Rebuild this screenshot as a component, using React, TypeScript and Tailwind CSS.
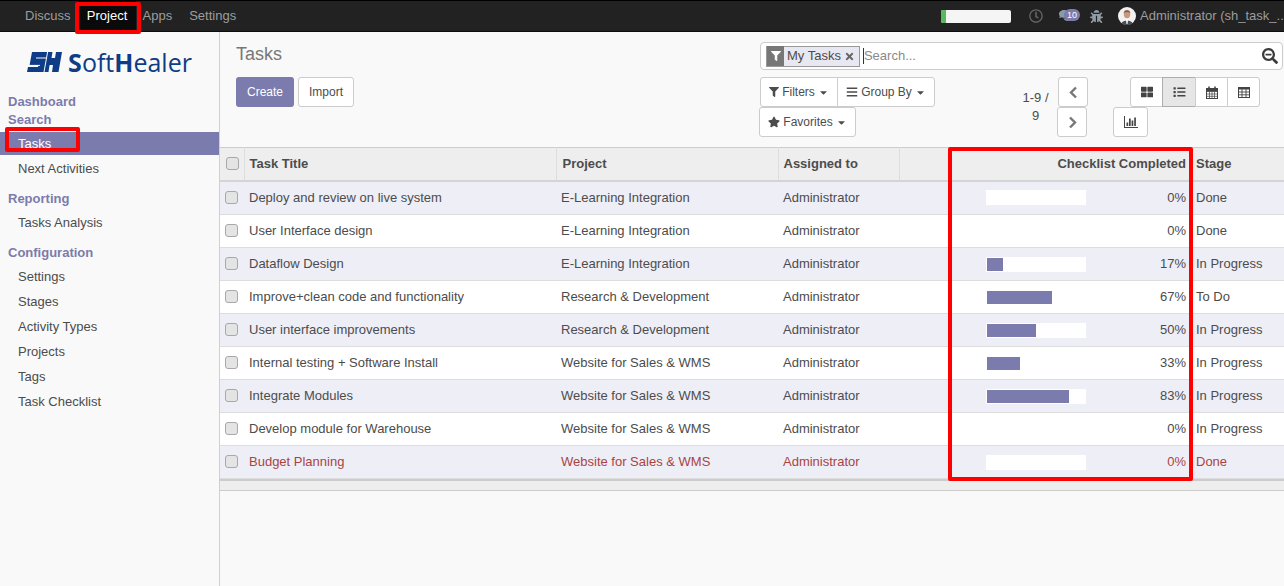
import React from "react";
import { FaFilter, FaBars, FaStar, FaThLarge, FaList, FaRegClock, FaComments, FaBug, FaSearchMinus, FaTimes, FaCaretDown } from "react-icons/fa";

const rows = [
  { t: "Deploy and review on live system", p: "E-Learning Integration", c: 0, w: 0, s: "Done", bar: true },
  { t: "User Interface design", p: "E-Learning Integration", c: 0, w: 0, s: "Done", bar: false },
  { t: "Dataflow Design", p: "E-Learning Integration", c: 17, w: 16, s: "In Progress", bar: true },
  { t: "Improve+clean code and functionality", p: "Research & Development", c: 67, w: 65, s: "To Do", bar: false },
  { t: "User interface improvements", p: "Research & Development", c: 50, w: 49, s: "In Progress", bar: true },
  { t: "Internal testing + Software Install", p: "Website for Sales & WMS", c: 33, w: 33, s: "In Progress", bar: false },
  { t: "Integrate Modules", p: "Website for Sales & WMS", c: 83, w: 82, s: "In Progress", bar: true },
  { t: "Develop module for Warehouse", p: "Website for Sales & WMS", c: 0, w: 0, s: "In Progress", bar: false },
  { t: "Budget Planning", p: "Website for Sales & WMS", c: 0, w: 0, s: "Done", bar: true, red: true },
];

function Check({ className = "" }: { className?: string }) {
  return <span className={`block w-[13px] h-[13px] rounded-[3px] bg-[#e4e4e4] border border-[#a8a8a8] ${className}`} />;
}

function Logo() {
  return (
    <div className="flex items-center justify-center h-[22px] mt-[19px] text-[#0f3c87]">
      <svg width="35" height="20" viewBox="0 0 35 20" className="mr-[6px]">
        <path d="M5 0H35L31.5 20H0L1 15H11L11.6 13H2.6L5 0Z" fill="#0f3c87" />
        <path d="M9 6H20M0 13.4H13" stroke="#f9f9f9" strokeWidth="1" fill="none" />
        <path d="M20.6 0L17 20" stroke="#f9f9f9" strokeWidth="1" fill="none" />
        <path d="M25.5 0H29L28 6H24.5Z" fill="#f9f9f9" />
        <path d="M22.6 13H26L25 20H21.5Z" fill="#f9f9f9" />
      </svg>
      <span className="font-['Open_Sans',sans-serif] text-[25px] leading-none whitespace-nowrap">
        <span className="font-bold">S</span>oft<span className="font-bold">H</span>ealer
      </span>
    </div>
  );
}

function SideHead({ children, className = "" }: { children: React.ReactNode; className?: string }) {
  return <div className={`pl-2 h-[18px] leading-[18px] font-bold text-[#7c7bad] text-[13px] ${className}`}>{children}</div>;
}
function SideItem({ children }: { children: React.ReactNode }) {
  return <div className="pl-[18px] h-[25px] leading-[25px] text-[13px] text-[#4c4c4c]">{children}</div>;
}
function Caret() {
  return <FaCaretDown className="inline-block w-[11px] h-[11px] ml-[3px]" />;
}
function Chevron({ right }: { right?: boolean }) {
  return (
    <svg width="9" height="13" viewBox="0 0 9 13">
      <path d={right ? "M2 1.5L7 6.5L2 11.5" : "M7 1.5L2 6.5L7 11.5"} stroke="#777777" strokeWidth="2.4" fill="none" />
    </svg>
  );
}
function CalendarIcon() {
  return (
    <svg width="12" height="13" viewBox="0 0 12 13" fill="none" stroke="#444444">
      <rect x="0.5" y="2.5" width="11" height="10" />
      <path d="M0.5 5.5H11.5M0.5 8H11.5M0.5 10.3H11.5M3.5 5.5V12.5M6 5.5V12.5M8.5 5.5V12.5" strokeWidth="0.7" />
      <path d="M3 0.5V3.5M9 0.5V3.5" strokeWidth="1.6" />
      <rect x="0.5" y="2.5" width="11" height="2.5" fill="#444444" />
    </svg>
  );
}
function TableIcon() {
  return (
    <svg width="12" height="11" viewBox="0 0 12 11" fill="none" stroke="#444444">
      <rect x="0.5" y="0.5" width="11" height="10" />
      <path d="M0.5 1.5H11.5" strokeWidth="2" />
      <path d="M0.5 5H11.5M0.5 7.8H11.5M4 2V10.5M8 2V10.5" strokeWidth="0.9" />
    </svg>
  );
}
function ChartIcon() {
  return (
    <svg width="14" height="12" viewBox="0 0 14 12" fill="#444444">
      <rect x="0" y="0" width="1" height="12" />
      <rect x="0" y="11" width="14" height="1" />
      <rect x="2.5" y="6.5" width="1.7" height="3.5" />
      <rect x="5" y="2.5" width="1.7" height="7.5" />
      <rect x="7.6" y="4.5" width="1.7" height="5.5" />
      <rect x="10.2" y="1.5" width="1.7" height="8.5" />
    </svg>
  );
}

const box = "h-[30px] border text-[#4c4c4c] text-[12px] flex items-center justify-center";
const btn = `${box} border-[#cccccc] bg-white`;

export default function App() {
  return (
    <div className="w-[1284px] h-[586px] overflow-hidden relative flex flex-col font-['Liberation_Sans',Arial,sans-serif] text-[13px] text-[#4c4c4c] bg-white">
      <header className="h-[32px] shrink-0 bg-[#222222] border-b border-[#0c0c0c] border-t border-t-[#000] flex items-center text-[13px] text-[#9d9d9d]">
        <div className="flex items-center ml-[17px]">
          <span className="px-2 h-[30px] leading-[30px]">Discuss</span>
          <span className="w-[57px] text-center h-[30px] leading-[30px] bg-[#0a0a0a] text-white">Project</span>
          <span className="ml-[7px] h-[30px] leading-[30px]">Apps</span>
          <span className="ml-[17px] h-[30px] leading-[30px]">Settings</span>
        </div>
        <div className="ml-auto flex items-center">
          <div className="w-[70px] h-[13px] rounded-[2px] bg-[#f5f5f5] overflow-hidden mr-[18px]">
            <div className="w-[5px] h-full bg-[#5cb85c]" />
          </div>
          <FaRegClock className="w-[14px] h-[14px] text-[#666666] mr-[16px]" />
          <div className="relative w-[20px] h-[14px] mr-[8px]">
            <FaComments className="absolute left-0 top-0 w-[14px] h-[13px] text-[#8a9ba8]" />
            <span className="absolute left-[5px] top-[0px] h-[12px] w-[16px] rounded-[6px] bg-[#7c7bad] text-white text-[9px] leading-[12px] text-center">10</span>
          </div>
          <FaBug className="w-[13px] h-[13px] text-[#8f9ba5] ml-[3px] mr-[15px]" />
          <svg width="18" height="18" viewBox="0 0 18 18" className="mr-[4px]">
            <circle cx="9" cy="9" r="9" fill="#f4f2f0" />
            <ellipse cx="9" cy="7" rx="3.3" ry="4.2" fill="#c79a80" />
            <path d="M5.7 6C6 2.5 12 2.5 12.3 6C10.5 4.5 7.5 4.5 5.7 6Z" fill="#6b5a50" />
            <path d="M3.5 16C5 12.5 13 12.5 14.5 16L12 18H6Z" fill="#4a4d55" />
            <path d="M8 12.5H10L9.5 17H8.5Z" fill="#fff" />
          </svg>
          <span className="whitespace-nowrap w-[144px]">Administrator (sh_task_..</span>
        </div>
      </header>

      <div className="flex-1 flex min-h-0">
        <aside className="w-[220px] shrink-0 bg-[#f9f9f9] border-r border-[#d0d0d0]">
          <Logo />
          <SideHead className="mt-[20px]">Dashboard</SideHead>
          <SideHead>Search</SideHead>
          <div className="pl-[18px] h-[23px] leading-[23px] bg-[#7c7bad] text-white mt-[3px] mb-[1px] text-[13px]">Tasks</div>
          <SideItem>Next Activities</SideItem>
          <SideHead className="mt-[9px] mb-[2px]">Reporting</SideHead>
          <SideItem>Tasks Analysis</SideItem>
          <SideHead className="mt-[9px] mb-[2px]">Configuration</SideHead>
          <SideItem>Settings</SideItem>
          <SideItem>Stages</SideItem>
          <SideItem>Activity Types</SideItem>
          <SideItem>Projects</SideItem>
          <SideItem>Tags</SideItem>
          <SideItem>Task Checklist</SideItem>
        </aside>

        <main className="flex-1 min-w-0 bg-[#f9f9f9] flex flex-col">
          <div className="h-[115px] shrink-0 flex">
            <div className="w-[540px] shrink-0 pl-[16px]">
              <div className="text-[18px] leading-[20px] text-[#777777] mt-[12px]">Tasks</div>
              <div className="flex mt-[13px] gap-[4px]">
                <button className="w-[58px] h-[30px] rounded-[3px] bg-[#7c7bad] text-white text-[12px]">Create</button>
                <button className="w-[56px] h-[30px] rounded-[3px] bg-white border border-[#cccccc] text-[12px] text-[#4c4c4c]">Import</button>
              </div>
            </div>
            <div className="flex-1 min-w-0 pr-[1px]">
              <div className="mt-[10px] h-[28px] rounded-[4px] border border-[#cccccc] bg-white flex items-center pl-[5px] pr-[4px]">
                <span className="flex items-center h-[21px] border border-[#999999] bg-[#e8e8f2]">
                  <span className="w-[17px] h-[20px] bg-[#777777] flex items-center justify-center"><FaFilter className="w-[10px] h-[10px] text-white" /></span>
                  <span className="px-[3px] text-[13px] leading-[20px] text-[#4c4c4c]">My Tasks</span>
                  <FaTimes className="w-[11px] h-[11px] text-[#666666] mr-[4px]" />
                </span>
                <span className="ml-[3px] w-[1px] h-[16px] bg-[#333333]" />
                <span className="text-[13px] text-[#8a8a8a]">Search...</span>
                <FaSearchMinus className="ml-auto w-[16px] h-[16px] text-[#3b3b3b]" />
              </div>
              <div className="flex mt-[7px]">
                <div className="w-[176px]">
                  <div className="flex">
                    <div className={`${btn} w-[78px] rounded-l-[3px]`}><FaFilter className="w-[10px] h-[10px] mr-[3px]" />Filters<Caret /></div>
                    <div className={`${btn} w-[98px] -ml-[1px] rounded-r-[3px]`}><FaBars className="w-[12px] h-[12px] mr-[3px]" />Group By<Caret /></div>
                  </div>
                  <div className={`${btn} w-[97px] -ml-[1px] rounded-[3px]`}><FaStar className="w-[12px] h-[12px] mr-[3px]" />Favorites<Caret /></div>
                </div>
                <div className="w-[85px] ml-[82px] mt-[12px] text-[13px] leading-[18px] text-center text-[#4c4c4c] pr-[50px] whitespace-nowrap shrink-0">1-9 /<br />9</div>
                <div className="-ml-[56px] shrink-0">
                  <div className={`${btn} w-[30px] rounded-[3px] ml-[11px]`}><Chevron /></div>
                  <div className={`${btn} w-[30px] rounded-[3px] ml-[10px]`}><Chevron right /></div>
                </div>
                <div className="ml-[25px] shrink-0">
                  <div className="flex ml-[17px]">
                    <div className={`${btn} w-[33px] rounded-l-[3px]`}><FaThLarge className="w-[12px] h-[12px] text-[#444444]" /></div>
                    <div className={`${box} w-[34px] -ml-[1px] bg-[#e6e6e6] border-[#adadad]`}><FaList className="w-[13px] h-[12px] text-[#444444]" /></div>
                    <div className={`${btn} w-[33px] -ml-[1px]`}><CalendarIcon /></div>
                    <div className={`${btn} w-[33px] -ml-[1px] rounded-r-[3px]`}><TableIcon /></div>
                  </div>
                  <div className={`${btn} w-[35px] rounded-[3px]`}><ChartIcon /></div>
                </div>
              </div>
            </div>
          </div>

          <div className="bg-white">
            <table className="table-fixed w-[1064px] border-collapse text-[13px]">
              <colgroup>
                <col className="w-[24px]" /><col className="w-[312px]" /><col className="w-[222px]" /><col className="w-[121px]" /><col className="w-[51px]" /><col className="w-[241px]" /><col />
              </colgroup>
              <thead>
                <tr className="h-[33px] bg-[#eeeeee] border-t border-t-[#cccccc] border-b-2 border-b-[#d4d4d4] text-left font-bold">
                  <th className="border-r border-[#dddddd]"><div className="pl-[6px]"><Check /></div></th>
                  <th className="pl-[5px] border-r border-[#dddddd]">Task Title</th>
                  <th className="pl-[6px] border-r border-[#dddddd]">Project</th>
                  <th className="pl-[5px] border-r border-[#dddddd]">Assigned to</th>
                  <th className="border-r border-[#dddddd]"></th>
                  <th className="pr-[5px] text-right">Checklist Completed</th>
                  <th className="pl-[5px]">Stage</th>
                </tr>
              </thead>
              <tbody>
                {rows.map((r, i) => (
                  <tr key={i} className={`${i === 0 ? "h-[34px]" : "h-[33px]"} border-b border-[#dddddd] ${i % 2 === 0 ? "bg-[#eeeef7]" : "bg-white"} ${r.red ? "text-[#a94442]" : ""}`}>
                    <td><div className="pl-[5px]"><Check className={i > 0 ? "-mt-[2px]" : ""} /></div></td>
                    <td className="pl-[5px]">{r.t}</td>
                    <td className="pl-[5px]">{r.p}</td>
                    <td className="pl-[5px]">Administrator</td>
                    <td />
                    <td className="pr-[5px]">
                      <div className="flex items-center">
                        <div className={`ml-[36px] w-[100px] h-[15px] pl-[1px] py-[1px] ${r.bar ? "bg-white" : ""}`}>
                          <div className="h-full bg-[#7c7bad]" style={{ width: `${r.w}px` }} />
                        </div>
                        <span className="ml-auto">{r.c}%</span>
                      </div>
                    </td>
                    <td className="pl-[5px] whitespace-nowrap">{r.s}</td>
                  </tr>
                ))}
              </tbody>
            </table>
            <div className="h-[12px] bg-[#eeeeee] border-t-2 border-b border-t-[#cccccc] border-b-[#cccccc]" />
          </div>
          <div className="flex-1 bg-[#f9f9f9]" />
        </main>
      </div>

      <div className="absolute left-[75px] top-[2px] w-[66px] h-[32px] border-4 border-[#ff0000] rounded-[2px]" />
      <div className="absolute left-[5px] top-[127px] w-[75px] h-[25px] border-4 border-[#ff0000] rounded-[2px]" />
      <div className="absolute left-[948px] top-[147px] w-[245px] h-[334px] border-[4px] border-[#ff0000] rounded-[2px]" />
    </div>
  );
}
